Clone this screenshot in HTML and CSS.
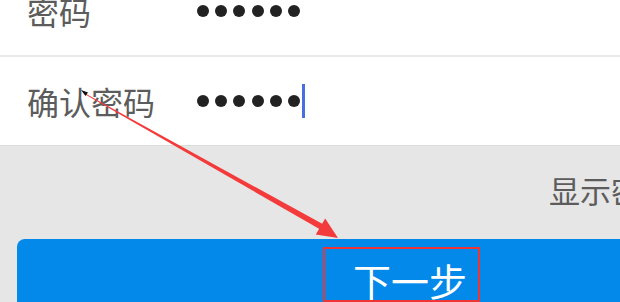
FILE: index.html
```html
<!DOCTYPE html>
<html lang="zh">
<head>
<meta charset="utf-8">
<link rel="stylesheet" href="styles.css">
</head>
<body>
<div class="page">
  <div class="form">
    <div class="row">
      <span class="label">密码</span>
      <span class="dots"><i></i><i></i><i></i><i></i><i></i><i></i></span>
    </div>
    <div class="row last">
      <span class="label">确认密码</span>
      <span class="dots"><i></i><i></i><i></i><i></i><i></i><i></i><b class="caret"></b></span>
    </div>
  </div>
  <div class="lower">
    <div class="toggle">显示密码</div>
    <div class="btn">下一步</div>
  </div>
  <div class="mark-box"></div>
  <svg class="mark-arrow" width="620" height="302" viewBox="0 0 620 302">
    <polygon points="83,92.2 84,93.8 326,232.8 329,227.6" fill="#f43b3b"/>
    <polygon points="338,238 315.8,234.6 325.2,218.4" fill="#f43b3b"/>
    <polygon points="81,90 88,92.5 85.5,96" fill="#111"/>
  </svg>
</div>
</body>
</html>
```

FILE: styles.css
```css
html, body {
  margin: 0;
  padding: 0;
  width: 620px;
  height: 302px;
  overflow: hidden;
  background: #e6e6e6;
}
.page {
  position: relative;
  display: flow-root;
  width: 820px;
  height: 302px;
  font-family: "Noto Sans CJK SC", "Noto Sans", sans-serif;
}
.form {
  background: #fff;
  margin-top: -33px;
}
.row {
  display: flex;
  align-items: center;
  height: 88px;
  padding-left: 27px;
  border-bottom: 2px solid #e9e9e9;
}
.row.last {
  border-bottom: 1px solid #dcdcdc;
}
.label {
  width: 170px;
  font-size: 32px;
  line-height: 1;
  color: #5c5c5c;
}
.dots {
  display: flex;
  align-items: center;
  gap: 6.2px;
  position: relative;
}
.dots i {
  display: block;
  width: 12px;
  height: 12px;
  border-radius: 50%;
  background: #222;
}
.caret {
  display: block;
  width: 3px;
  height: 34px;
  margin-left: -4px;
  background: #4a6ee0;
}
.lower {
  background: #e6e6e6;
  padding-top: 28px;
}
.toggle {
  font-size: 31px;
  line-height: 1;
  color: #5c5c5c;
  padding-left: 549px;
  white-space: nowrap;
}
.btn {
  margin-top: 34px;
  margin-left: 17px;
  width: 786px;
  height: 100px;
  border-radius: 8px;
  background: #0389ea;
  color: #fff;
  font-size: 38px;
  line-height: 1;
  text-align: center;
  box-sizing: border-box;
  padding-top: 22px;
}
.mark-box {
  position: absolute;
  left: 323px;
  top: 247px;
  width: 153px;
  height: 51px;
  border: 2px solid #ee3434;
}
.mark-arrow {
  position: absolute;
  left: 0;
  top: 0;
}
```
